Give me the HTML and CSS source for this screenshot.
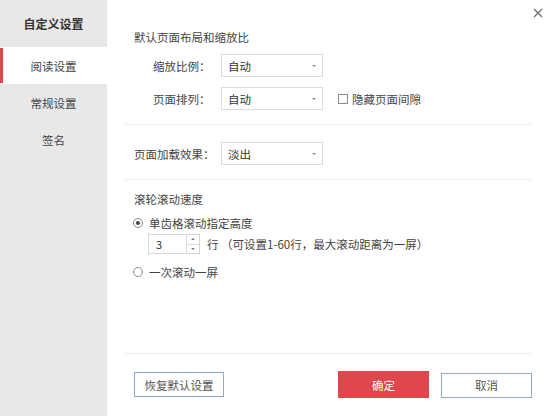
FILE: index.html
```html
<!DOCTYPE html>
<html lang="zh">
<head>
<meta charset="utf-8">
<title>自定义设置</title>
<link rel="stylesheet" href="styles.css">
</head>
<body>
<div class="dialog">
  <aside class="sidebar">
    <div class="side-head">自定义设置</div>
    <div class="side-item active">阅读设置</div>
    <div class="side-item">常规设置</div>
    <div class="side-item">签名</div>
  </aside>
  <main class="main">
    <div class="close" role="button" aria-label="关闭">
      <svg width="10" height="10" viewBox="0 0 10 10"><path d="M1 1L9 9M9 1L1 9" stroke="#6f6f6f" stroke-width="1.4" fill="none"/></svg>
    </div>
    <section class="sec sec-layout">
      <div class="sec-title">默认页面布局和缩放比</div>
      <div class="row indent">
        <span class="label short">缩放比例：</span>
        <div class="select"><span>自动</span><i class="caret"></i></div>
      </div>
      <div class="row indent">
        <span class="label short">页面排列：</span>
        <div class="select"><span>自动</span><i class="caret"></i></div>
        <label class="check"><i class="box"></i>隐藏页面间隙</label>
      </div>
    </section>
    <section class="sec sec-load">
      <div class="row">
        <span class="label long">页面加载效果：</span>
        <div class="select"><span>淡出</span><i class="caret"></i></div>
      </div>
    </section>
    <section class="sec sec-scroll">
      <div class="sec-title">滚轮滚动速度</div>
      <div class="radio-row"><i class="radio on"></i>单齿格滚动指定高度</div>
      <div class="spin-row">
        <div class="spin"><span class="spin-val">3</span><div class="spin-btns"><i class="up"></i><i class="down"></i></div></div>
        <span class="spin-text">行 （可设置1-60行，最大滚动距离为一屏）</span>
      </div>
      <div class="radio-row"><i class="radio"></i>一次滚动一屏</div>
    </section>
    <footer class="footer">
      <button class="btn btn-line">恢复默认设置</button>
      <div class="footer-right">
        <button class="btn btn-primary">确定</button>
        <button class="btn btn-line">取消</button>
      </div>
    </footer>
  </main>
</div>
</body>
</html>
```
FILE: styles.css
```css
* { box-sizing: border-box; }
html, body { margin: 0; padding: 0; background: #fff; }
body {
  font-family: "Noto Sans CJK SC", "Microsoft YaHei", sans-serif;
  font-size: 11.5px;
  color: #444;
  line-height: 16px;
}
.dialog { display: flex; width: 550px; height: 416px; }

.sidebar { width: 107px; background: #e8e8e8; flex-shrink: 0; }
.side-head {
  height: 47px; display: flex; align-items: center; justify-content: center;
  font-weight: bold; color: #333; font-size: 12px;
}
.side-item {
  height: 37px; display: flex; align-items: center; justify-content: center;
  color: #444; position: relative;
}
.side-item.active { background: #fff; }
.side-item.active::before {
  content: ""; position: absolute; left: 0; top: 1px; bottom: 1px; width: 3px; background: #e0474c;
}

.main { flex: 1; position: relative; padding: 0 18px 0 17px; display: flex; flex-direction: column; }
.close {
  position: absolute; top: 8px; left: 426px; width: 10px; height: 10px;
}
.close svg { display: block; }

.sec { padding-left: 10px; border-bottom: 1px solid #efefef; }
.sec-layout { padding-top: 29px; padding-bottom: 14px; }
.sec-layout .row + .row { margin-top: 10px; }
.sec-layout .sec-title { margin-bottom: 9px; }
.sec-load { padding-top: 17px; padding-bottom: 14px; }
.sec-scroll { padding-top: 11px; border-bottom: 0; flex: 1; }

.sec-title { height: 16px; color: #444; }
.row { display: flex; align-items: center; height: 23px; }
.row.indent { padding-left: 19px; }
.label.short { width: 68px; }
.label.long { width: 87px; }
.select {
  width: 102px; height: 23px; border: 1px solid #dadada; position: relative;
  display: flex; align-items: center; padding-left: 6px; color: #333;
}
.caret {
  position: absolute; right: 6px; top: 10px; width: 0; height: 0;
  border-left: 2px solid transparent; border-right: 2px solid transparent; border-top: 2px solid #888;
}
.check { display: flex; align-items: center; margin-left: 15px; color: #444; }
.box { width: 10px; height: 10px; border: 1px solid #8a8a8a; margin-right: 4px; background: #fff; }

.radio-row { display: flex; align-items: center; height: 16px; margin-top: 8px; margin-left: -1px; }
.radio {
  width: 10px; height: 10px; border: 1px solid #8a8a8a; border-radius: 50%;
  margin-right: 6px; position: relative; background: #fff;
}
.radio.on::after {
  content: ""; position: absolute; left: 2px; top: 2px; width: 4px; height: 4px; border-radius: 50%; background: #444;
}
.spin-row { display: flex; align-items: center; margin-top: 3px; padding-left: 14px; }
.spin {
  width: 52px; height: 20px; border: 1px solid #d6d6d6; display: flex; align-items: center;
}
.spin-val { flex: 1; padding-left: 7px; color: #333; font-size: 11px; }
.spin-btns { width: 13px; height: 100%; border-left: 1px solid #dcdcdc; display: flex; flex-direction: column; }
.spin-btns i { flex: 1; position: relative; }
.spin-btns .up { border-bottom: 1px solid #dcdcdc; }
.spin-btns i::after {
  content: ""; position: absolute; left: 4px; top: 3px; width: 0; height: 0;
  border-left: 2px solid transparent; border-right: 2px solid transparent;
}
.spin-btns .up::after { border-bottom: 2px solid #777; }
.spin-btns .down::after { border-top: 2px solid #777; }
.spin-text { margin-left: 7px; color: #444; }
.radio-row + .spin-row + .radio-row { margin-top: 10px; }

.footer {
  height: 63px; border-top: 1px solid #efefef; display: flex; justify-content: space-between;
  align-items: flex-start; padding: 18px 0 0 10px;
}
.footer-right { display: flex; gap: 12px; align-items: center; }
.btn {
  font-family: inherit; font-size: 11.5px; height: 25px; padding: 0; cursor: pointer;
  display: flex; align-items: center; justify-content: center;
}
.btn-line { width: 90px; border: 1px solid #8ea8d8; background: #fff; color: #555; }
.footer-right .btn-line { width: 91px; }
.btn-primary { width: 91px; height: 27px; border: 0; background: #e0474c; color: #fff; margin-top: -1px; }
```
